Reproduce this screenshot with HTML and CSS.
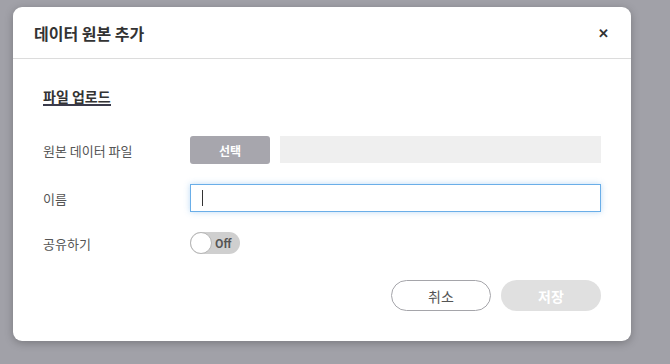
FILE: index.html
```
<!DOCTYPE html>
<html>
  <head>
    <meta charset="utf-8" />
    <title>데이터 원본 추가</title>
    <link rel="stylesheet" href="styles.css">
  </head>
  <body>
    <div class="modal">
      <div class="modal-header">
        <h2>데이터 원본 추가</h2>
        <span class="close">&#x2715;</span>
      </div>

      <div class="modal-body">
        <h3 class="section-title">파일 업로드</h3>

        <div class="form-row">
          <label>원본 데이터 파일</label>
          <div class="file-field">
            <button class="select-btn">선택</button>
            <div class="file-name"></div>
          </div>
        </div>

        <div class="form-row">
          <label>이름</label>
          <div class="text-input"><span class="caret"></span></div>
        </div>

        <div class="form-row">
          <label>공유하기</label>
          <div class="toggle">
            <span class="knob"></span>
            <span class="toggle-text">Off</span>
          </div>
        </div>

        <div class="footer">
          <button class="btn btn-cancel">취소</button>
          <button class="btn btn-save">저장</button>
        </div>
      </div>
    </div>
  </body>
</html>
```

FILE: styles.css
```
body {
  margin: 0;
  padding: 7px 13px;
  background: #a1a1a8;
  font-family: "Noto Sans CJK KR", "Noto Sans", sans-serif;
  height: 364px;
  box-sizing: border-box;
  overflow: hidden;
}

.modal {
  width: 618px;
  height: 334px;
  background: #fff;
  border-radius: 9px;
  box-shadow: 0 2px 8px rgba(0, 0, 0, 0.25);
  box-sizing: border-box;
}

.modal-header {
  height: 52px;
  border-bottom: 1px solid #dcdcdc;
  display: flex;
  align-items: center;
  justify-content: space-between;
  padding: 0 22px 0 21px;
  box-sizing: border-box;
}

.modal-header h2 {
  margin: 0;
  font-size: 16px;
  font-weight: 700;
  color: #333;
}

.close {
  font-size: 13px;
  font-weight: 700;
  color: #333;
}

.modal-body {
  padding: 29px 30px 0 30px;
}

.section-title {
  display: block;
  width: fit-content;
  margin: 0 0 30px 0;
  font-size: 14px;
  font-weight: 700;
  color: #333;
  line-height: 16px;
  border-bottom: 2px solid #3b3b4b;
}

.form-row {
  display: flex;
  align-items: center;
  margin-bottom: 20px;
}

.form-row label {
  width: 147px;
  font-size: 13px;
  color: #555;
}

.file-field {
  flex: 1;
  display: flex;
  gap: 10px;
}

.select-btn {
  width: 80px;
  height: 28px;
  border: none;
  border-radius: 3px;
  background: #a7a6ad;
  color: #fff;
  font-family: inherit;
  font-size: 12px;
  font-weight: 700;
}

.file-name {
  flex: 1;
  height: 27px;
  background: #efefef;
}

.text-input {
  flex: 1;
  height: 28px;
  border: 1px solid #6aaee8;
  box-shadow: 0 0 6px rgba(106, 174, 232, 0.45);
  box-sizing: border-box;
  display: flex;
  align-items: center;
  padding-left: 11px;
}

.caret {
  width: 1px;
  height: 16px;
  background: #333;
}

.toggle {
  width: 50px;
  height: 22px;
  border-radius: 11px;
  background: #cfcfcf;
  display: flex;
  align-items: center;
  box-sizing: border-box;
}

.knob {
  width: 22px;
  height: 22px;
  border-radius: 50%;
  background: #fff;
  border: 1px solid #b5b5b5;
  box-sizing: border-box;
}

.toggle-text {
  margin-left: 3px;
  font-size: 11px;
  font-weight: 700;
  color: #555;
}

.footer {
  display: flex;
  justify-content: flex-end;
  gap: 10px;
  margin-top: 26px;
}

.btn {
  width: 100px;
  height: 31px;
  border-radius: 16px;
  font-family: inherit;
  font-size: 14px;
}

.btn-cancel {
  background: #fff;
  border: 1px solid #a5a5aa;
  color: #555;
}

.btn-save {
  background: #e0e0e0;
  border: none;
  color: #fff;
  font-weight: 700;
}
```
